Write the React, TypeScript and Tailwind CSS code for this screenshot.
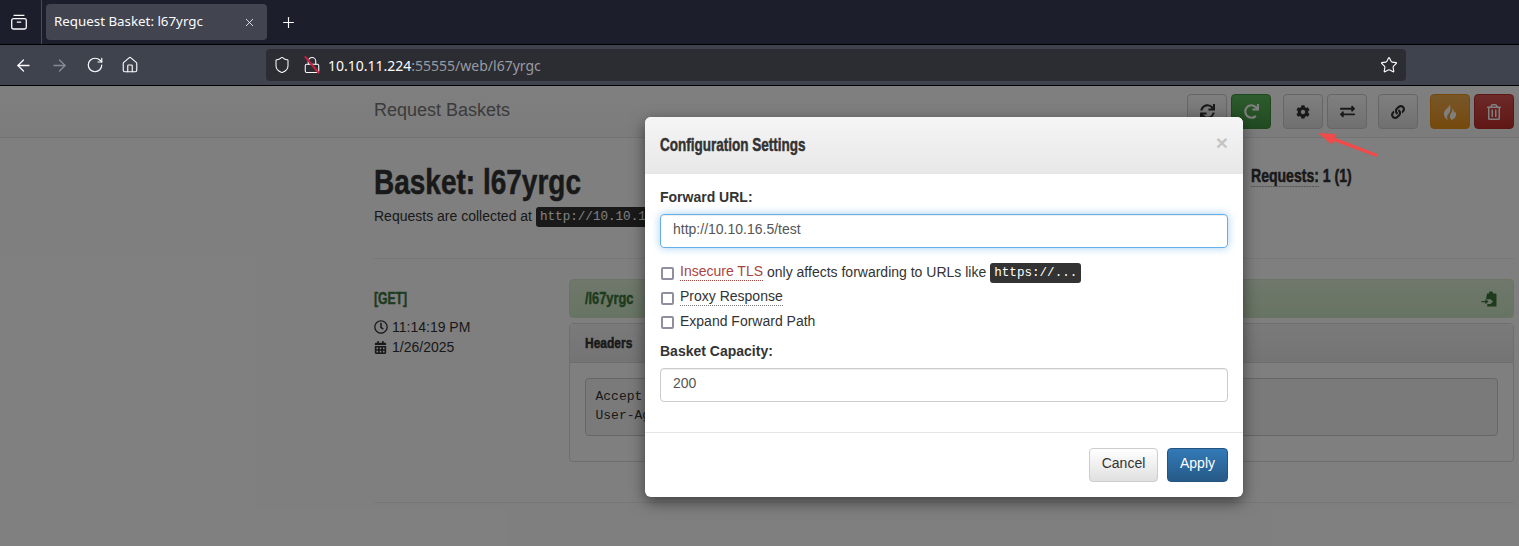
import type { ReactNode } from 'react'
import { ArrowLeft, ArrowRight, RotateCw, Home, Shield, Star, Plus, X, Lock } from 'lucide-react'
import { FaSync, FaRedo, FaCog, FaExchangeAlt, FaLink, FaRegTrashAlt, FaRegClock, FaCalendarAlt } from 'react-icons/fa'

const sans = "font-['Liberation_Sans',Arial,sans-serif]"
const mono = "font-['Liberation_Mono',monospace]"

// the page uses a heavy condensed face, squeezed Liberation Sans Bold stands in for it
function Condensed({ children, scale = 'scale-x-[0.8]' }: { children: ReactNode; scale?: string }) {
  return (
    <span className={`inline-block origin-left whitespace-nowrap font-bold [-webkit-text-stroke:0.5px_currentColor] ${scale}`}>
      {children}
    </span>
  )
}

function ToolButton({ children, className = 'border-[#ccc] from-white to-[#e0e0e0] text-[#333]' }: { children: ReactNode; className?: string }) {
  return (
    <button className={`flex h-[35px] w-10 items-center justify-center rounded border bg-gradient-to-b ${className}`}>
      {children}
    </button>
  )
}

function Box() {
  return <span className="mt-[3px] block h-[13px] w-[13px] shrink-0 translate-x-[1px] rounded-[2px] border-2 border-[#8f8f9d] bg-white" />
}

function BrowserChrome() {
  return (
    <div className="h-[86px] shrink-0 font-['Noto_Sans',sans-serif]">
      <div className="flex h-[45px] items-center border-b border-black bg-[#1c1f2b] text-[#fbfbfe]">
        <div className="flex h-full w-[42px] items-center border-r border-[#4a4d57] pl-[11px]">
          <svg width="16" height="16" viewBox="0 0 16 16" fill="none" stroke="currentColor" strokeWidth="1.3">
            <rect x="0.7" y="4.6" width="14.6" height="10.4" rx="1.8" />
            <path d="M2.6 1.3h10.8M5.8 8.2h4.4" />
          </svg>
        </div>
        <div className="ml-1 flex h-9 w-[221px] items-center justify-between rounded bg-[#42454f] pl-2 pr-[11px] text-[13.33px]">
          <span>Request Basket: l67yrgc</span>
          <X size={13} strokeWidth={1.5} />
        </div>
        <Plus size={17} strokeWidth={1.6} className="ml-[13px]" />
      </div>
      <div className="flex h-[41px] items-center border-b border-black bg-[#3f434e] text-[#fbfbfe]">
        <ArrowLeft size={19} strokeWidth={1.6} className="ml-[14px]" />
        <ArrowRight size={19} strokeWidth={1.6} className="ml-[17px] text-[#8a8c94]" />
        <RotateCw size={18} strokeWidth={1.6} className="ml-[17px]" />
        <Home size={18} strokeWidth={1.5} className="ml-[17px]" />
        <div className="ml-[127px] flex h-8 w-[1140px] items-center rounded bg-[#2c2d33] text-[14px]">
          <Shield size={18} strokeWidth={1.4} className="ml-[7px]" />
          <span className="relative ml-3 flex">
            <Lock size={18} strokeWidth={1.4} />
            <span className="absolute left-[8px] top-[-2px] h-[22px] w-[1.5px] -rotate-40 bg-[#c9203f]" />
          </span>
          <span className="ml-[7px]">10.10.11.224</span>
          <span className="text-[#9a9ba1]">:55555/web/l67yrgc</span>
          <Star size={18} strokeWidth={1.5} className="ml-auto mr-2" />
        </div>
      </div>
    </div>
  )
}

function PasteIcon() {
  return (
    <svg width="16" height="16" viewBox="0 0 16 16">
      <path d="M6 2.5h2V1.6C8 .9 8.7.4 10 .4s2 .5 2 1.2v.9h2.5a1 1 0 0 1 1 1V15.6H6.2V13H9.6L12 10.6 9.6 8.2H5Z" fill="currentColor" />
      <path d="M0.5 10.6H6M4.4 8.8l2 1.8-2 1.8" fill="none" stroke="currentColor" strokeWidth="1.4" />
    </svg>
  )
}

function FlameIcon() {
  return (
    <svg width="14" height="16" viewBox="0 0 14 16" fill="currentColor">
      <path d="M6.6 0C7.4 2.6 3 4.4 1.6 7.2.2 10 1.2 13.8 5 16 3.4 13.4 3.8 11.4 6 9.2 7 7.8 8.4 4 6.6 0Z" />
      <path d="M9.4 4.6c.6 2-.8 3.6-1.6 5-1.2 2-1.2 4.2.6 6.4 3.2-1 5-3.6 4.6-6.4-.2-1.2-.8-1.8-1.2-2.4 0 1-.4 1.6-1 1.8.4-1.6 0-3.4-1.4-4.4Z" />
    </svg>
  )
}

function BasketPage() {
  return (
    <div className={`${sans} w-[1888px] text-sm text-[#333]`}>
      <div className="h-[52px] border-b border-[#e7e7e7] bg-gradient-to-b from-white to-[#f8f8f8]">
        <div className="ml-[374px] flex h-full w-[1140px] items-start justify-between pt-2">
          <span className="mt-[2px] text-lg text-[#777]">Request Baskets</span>
          <div className="flex text-sm">
            <ToolButton><FaSync size={15} /></ToolButton>
            <div className="ml-1">
              <ToolButton className="border-[#3e8f3e] from-[#5cb85c] to-[#419641] text-white"><FaRedo size={15} /></ToolButton>
            </div>
            <div className="ml-3">
              <ToolButton><FaCog size={14} /></ToolButton>
            </div>
            <div className="ml-1">
              <ToolButton><FaExchangeAlt size={15} /></ToolButton>
            </div>
            <div className="ml-[11px]">
              <ToolButton><FaLink size={14} /></ToolButton>
            </div>
            <div className="ml-3">
              <ToolButton className="border-[#eb9316] from-[#f0ad4e] to-[#eb9316] text-white"><FlameIcon /></ToolButton>
            </div>
            <div className="ml-1">
              <ToolButton className="border-[#b92c28] from-[#d9534f] to-[#c12e2a] text-white"><FaRegTrashAlt size={16} /></ToolButton>
            </div>
          </div>
        </div>
      </div>

      <div className="ml-[374px] w-[1140px]">
        <div className="flex h-[121px] border-b border-[#eee]">
          <div className="w-[877px] pt-6">
            <h1 className="h-[40px] text-[35px] leading-[40px] text-[#333]"><Condensed>Basket: l67yrgc</Condensed></h1>
            <p className="mt-1 flex items-center">
              Requests are collected at
              <code className={`${mono} ml-1 translate-y-[1px] rounded-[3px] bg-[#333] px-1 py-0.5 text-[12.6px] leading-4 text-white`}>http://10.10.11.224:55555/l67yrgc</code>
            </p>
          </div>
          <div className="pt-[26px] text-[18px] leading-[24px] text-[#333]">
            <Condensed scale="scale-x-[0.78]">
              <abbr className="no-underline [border-bottom:1px_dotted_#777]">Requests:</abbr> 1 (1)
            </Condensed>
          </div>
        </div>

        <div className="flex h-[244px] border-b border-[#eee] pt-5">
          <div className="w-[195px]">
            <div className="mt-[10px] h-5 text-base leading-5 text-[#3c763d]"><Condensed scale="scale-x-[0.76]">[GET]</Condensed></div>
            <div className="mt-2 flex items-center leading-5">
              <FaRegClock size={14} className="mr-1" />11:14:19 PM
            </div>
            <div className="flex items-center leading-5">
              <FaCalendarAlt size={13} className="mr-[5px]" />1/26/2025
            </div>
          </div>
          <div className="w-[945px]">
            <div className="flex h-[39px] items-center justify-between rounded border border-[#d6e9c6] bg-gradient-to-b from-[#dff0d8] to-[#d0e9c6] pl-[15px] pr-4 text-base text-[#3c763d]">
              <Condensed>/l67yrgc</Condensed>
              <PasteIcon />
            </div>
            <div className="mt-[5px] h-[139px] rounded border border-[#ddd] bg-white">
              <div className="flex h-[39px] items-center border-b border-[#ddd] bg-gradient-to-b from-[#f5f5f5] to-[#e8e8e8] px-[15px] text-[15px]">
                <Condensed>Headers</Condensed>
              </div>
              <pre className={`${mono} mx-[15px] mt-[15px] h-[58px] rounded border border-[#ccc] bg-[#f5f5f5] px-[9.5px] pb-[9.5px] pt-2 text-[13px] leading-[19px]`}>
                {'Accept: */*\nUser-Agent: curl/8.5.0'}
              </pre>
            </div>
          </div>
        </div>
      </div>
    </div>
  )
}

function ConfigModal() {
  return (
    <div className={`${sans} absolute left-[645px] top-[31px] h-[380px] w-[598px] rounded-md bg-white text-sm text-[#333] shadow-[0_5px_15px_rgba(0,0,0,0.5)]`}>
      <div className="flex h-[57px] items-center justify-between rounded-t-md border-b border-[#e5e5e5] bg-gradient-to-b from-[#f5f5f5] to-[#e8e8e8] px-[15px]">
        <span className="pt-px text-[18px]"><Condensed scale="scale-x-[0.75]">Configuration Settings</Condensed></span>
        <span className="mt-[-4px] text-[21px] font-bold text-[#c4c4c4]">×</span>
      </div>
      <div className="h-[259px] border-b border-[#e5e5e5] px-[15px] pt-[13px]">
        <label className="block h-5 font-bold leading-5">Forward URL:</label>
        <input
          readOnly
          value="http://10.10.16.5/test"
          className="mt-[7px] block h-[34px] w-full rounded border border-[#66afe9] px-3 pb-[5px] text-[#555] shadow-[inset_0_1px_1px_rgba(0,0,0,.075),0_0_8px_rgba(102,175,233,.6)] outline-none"
        />
        <div className="mt-[14px] flex h-[20px] items-center">
          <Box />
          <span className="ml-[7px] text-[#a94442] [border-bottom:1px_dotted_#a94442] leading-[17px]">Insecure TLS</span>
          <span className="ml-1">only affects forwarding to URLs like</span>
          <code className={`${mono} ml-1 translate-y-[1px] rounded-[3px] bg-[#333] px-1 py-0.5 text-[12.6px] leading-4 text-white`}>https://...</code>
        </div>
        <div className="mt-[5px] flex h-[20px] items-center">
          <Box />
          <span className="ml-[7px] [border-bottom:1px_dotted_#777] leading-[17px]">Proxy Response</span>
        </div>
        <div className="mt-1 flex h-[20px] items-center">
          <Box />
          <span className="ml-[7px]">Expand Forward Path</span>
        </div>
        <label className="mt-[10px] block h-5 font-bold leading-5">Basket Capacity:</label>
        <input
          readOnly
          value="200"
          className="mt-[7px] block h-[34px] w-full rounded border border-[#ccc] px-3 pb-1 text-[#555] shadow-[inset_0_1px_1px_rgba(0,0,0,.075)] outline-none"
        />
      </div>
      <div className="flex justify-end gap-[9px] px-[15px] pt-[15px]">
        <button className="h-[34px] w-[69px] rounded border border-[#ccc] bg-gradient-to-b from-white to-[#e0e0e0] pb-1 text-[#333]">Cancel</button>
        <button className="h-[34px] w-[61px] rounded border border-[#245580] bg-gradient-to-b from-[#337ab7] to-[#265a88] pb-1 text-white">Apply</button>
      </div>
    </div>
  )
}

export default function App() {
  return (
    <div className="flex h-[546px] w-[1519px] flex-col overflow-hidden bg-white">
      <BrowserChrome />
      <div className="relative flex-1 overflow-hidden">
        <BasketPage />
        <div className="absolute inset-0 bg-black/50" />
        <ConfigModal />
        <svg className="absolute left-[1310px] top-[40px]" width="72" height="36" viewBox="0 0 72 36">
          <path d="M8 7 L26 8 L24.5 11.5 L67.5 28 L66.5 31 L23.5 15 L21.5 18.5 Z" fill="#f04a4a" />
        </svg>
      </div>
    </div>
  )
}
